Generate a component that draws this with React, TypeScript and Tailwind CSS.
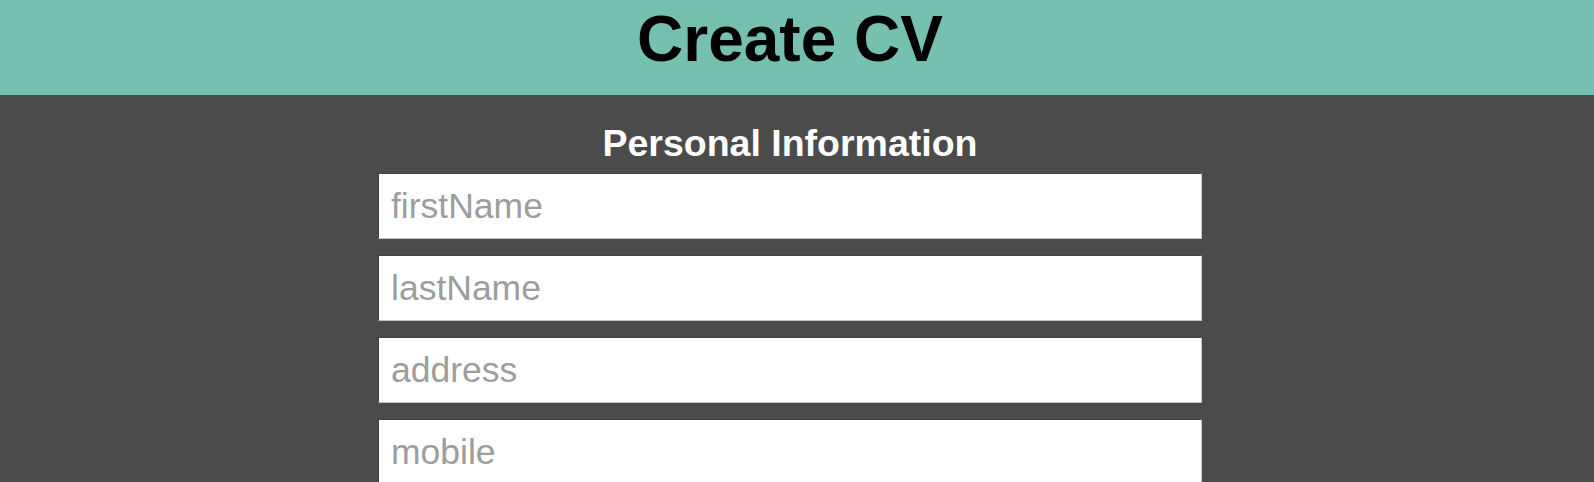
import React from "react";

export default function App() {
  const fields = ["firstName", "lastName", "address", "mobile"];
  return (
    <div className="min-h-screen bg-[#4b4b4b] font-['Liberation_Sans',Arial,sans-serif]">
      <header className="h-[95px] bg-[#76c0b0] pr-[14px] pt-[2px]">
        <h1 className="text-center text-[64px] leading-[74px] font-bold text-black">Create CV</h1>
      </header>
      <main className="pr-[14px] flex flex-col items-center">
        <h2 className="mt-[27px] mb-[8px] text-[37.5px] leading-[43px] font-bold text-white">Personal Information</h2>
        <div className="flex w-[824px] flex-col gap-4">
          {fields.map((f) => (
            <input
              key={f}
              placeholder={f}
              className="h-[66px] w-full bg-white pl-[12px] text-[35.5px] text-black placeholder:text-[#9d9d9d] outline-none border-t border-l border-t-[#404040] border-l-[#404040] border-b border-r border-b-[#c4c4c4] border-r-[#c4c4c4]"
            />
          ))}
        </div>
      </main>
    </div>
  );
}
